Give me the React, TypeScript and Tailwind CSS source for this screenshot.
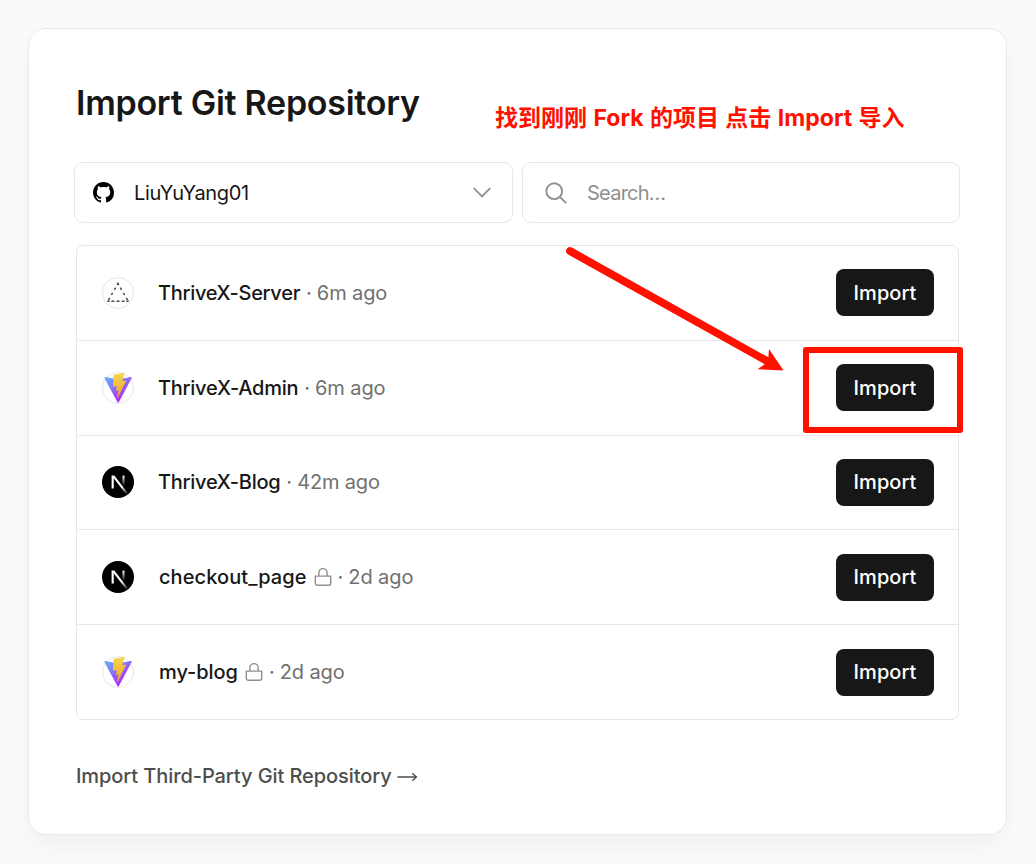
import type { ReactNode } from "react";

type Framework = "none" | "vite" | "next";

type Repo = {
  name: string;
  framework: Framework;
  updated: string;
  isPrivate?: boolean;
  nameClass: string;
  timeClass: string;
};

const repos: Repo[] = [
  { name: "ThriveX-Server", framework: "none", updated: "6m ago", nameClass: "-ml-px tracking-[-0.3px]", timeClass: "tracking-[-0.1px]" },
  { name: "ThriveX-Admin", framework: "vite", updated: "6m ago", nameClass: "-ml-px tracking-[-0.25px]", timeClass: "tracking-[-0.1px]" },
  { name: "ThriveX-Blog", framework: "next", updated: "42m ago", nameClass: "-ml-px tracking-[-0.27px]", timeClass: "tracking-[-0.15px]" },
  { name: "checkout_page", framework: "next", updated: "2d ago", isPrivate: true, nameClass: "tracking-[0.08px]", timeClass: "tracking-[-0.1px]" },
  { name: "my-blog", framework: "vite", updated: "2d ago", isPrivate: true, nameClass: "tracking-[-0.05px]", timeClass: "tracking-[-0.1px]" },
];

function GithubIcon() {
  return (
    <svg viewBox="0 0 16 16" className="size-[21px] shrink-0" fill="#000">
      <path d="M8 0C3.58 0 0 3.58 0 8c0 3.54 2.29 6.53 5.47 7.59.4.07.55-.17.55-.38 0-.19-.01-.82-.01-1.49-2.01.37-2.53-.49-2.69-.94-.09-.23-.48-.94-.82-1.13-.28-.15-.68-.52-.01-.53.63-.01 1.08.58 1.23.82.72 1.21 1.87.87 2.33.66.07-.52.28-.87.51-1.07-1.78-.2-3.64-.89-3.64-3.95 0-.87.31-1.59.82-2.15-.08-.2-.36-1.02.08-2.12 0 0 .67-.21 2.2.82.64-.18 1.32-.27 2-.27s1.36.09 2 .27c1.53-1.04 2.2-.82 2.2-.82.44 1.1.16 1.92.08 2.12.51.56.82 1.27.82 2.15 0 3.07-1.87 3.75-3.65 3.95.29.25.54.73.54 1.48 0 1.07-.01 1.93-.01 2.2 0 .21.15.46.55.38A8.01 8.01 0 0 0 16 8c0-4.42-3.58-8-8-8Z" />
    </svg>
  );
}

function ChevronIcon() {
  return (
    <svg viewBox="0 0 20 12" className="h-3 w-5 shrink-0" fill="none" stroke="#8f8f8f" strokeWidth="1.9">
      <path d="M1.8 1.2 10 9.4l8.2-8.2" />
    </svg>
  );
}

function SearchIcon() {
  return (
    <svg viewBox="0 0 24 24" className="size-6 shrink-0" fill="none" stroke="#8f8f8f" strokeWidth="1.9">
      <circle cx="10.2" cy="10.2" r="7.9" />
      <path d="m15.8 15.8 6.4 6.4" />
    </svg>
  );
}

function LockIcon() {
  return (
    <svg viewBox="0 0 18 20" className="h-5 w-[18px] shrink-0" fill="none" stroke="#8f8f8f" strokeWidth="1.4">
      <path d="M4.900 9.100V5.700a4.100 4.100 0 0 1 8.200 0v3.400" />
      <path d="M1.300 9.100h15.400v7.200a2 2 0 0 1-2 2H3.300a2 2 0 0 1-2-2z" />
    </svg>
  );
}

function Avatar({ children }: { children: ReactNode }) {
  return (
    <span className="flex size-8 shrink-0 items-center justify-center overflow-hidden rounded-full border border-[#e6e6e6] bg-white">
      {children}
    </span>
  );
}

function ViteLogo({ id }: { id: string }) {
  return (
    <svg viewBox="0 0 32 32" className="size-8 shrink-0">
      <defs>
        <linearGradient id={`${id}-body`} x1="3" y1="5" x2="18" y2="28" gradientUnits="userSpaceOnUse">
          <stop stopColor="#5fb4fb" />
          <stop offset="0.12" stopColor="#6aa5f8" />
          <stop offset="1" stopColor="#b12cfb" />
        </linearGradient>
        <linearGradient id={`${id}-bolt`} x1="14" y1="2" x2="18" y2="24" gradientUnits="userSpaceOnUse">
          <stop stopColor="#f9d54f" />
          <stop offset="0.5" stopColor="#f3bd3d" />
          <stop offset="1" stopColor="#eda531" />
        </linearGradient>
      </defs>
      <circle cx="16" cy="16" r="15.5" fill="#fff" stroke="#e6e6e6" />
      <path d="M29.6 6.2 16.8 30.3c-.3.6-1 .6-1.3 0L2.5 6.2c-.3-.6.2-1.2.9-1.1L16 7.4l12.8-2.3c.6-.1 1.1.5.8 1.1Z" fill={`url(#${id}-body)`} />
      <path d="m22.2.8-10.300 1.900a.5.5 0 0 0-.4.4L10.900 14.400c0 .3.2.5.5.4l3-.6c.3-.1.5.2.4.4l-.8 4.100c-.1.3.2.5.4.4l1.600-.5c.3-.1.5.2.4.4l-1.300 6.400c-.1.4.4.6.7.3l.2-.2 8-16.600c.1-.3-.1-.6-.4-.5l-2.800.5c-.3.1-.5-.2-.4-.4L22.600 1.300c.1-.3-.1-.5-.4-.5Z" fill={`url(#${id}-bolt)`} />
    </svg>
  );
}

function NextLogo({ id }: { id: string }) {
  return (
    <svg viewBox="0 0 180 180" className="size-8 shrink-0">
      <defs>
        <linearGradient id={`${id}-slash`} x1="109" y1="116.5" x2="144.5" y2="160.5" gradientUnits="userSpaceOnUse">
          <stop stopColor="#fff" />
          <stop offset="1" stopColor="#fff" stopOpacity="0" />
        </linearGradient>
        <linearGradient id={`${id}-stem`} x1="121" y1="54" x2="120.8" y2="112" gradientUnits="userSpaceOnUse">
          <stop stopColor="#fff" />
          <stop offset="1" stopColor="#fff" stopOpacity="0" />
        </linearGradient>
      </defs>
      <circle cx="90" cy="90" r="90" fill="#000" />
      <path d="M149.508 157.52 69.142 54H54v71.97h12.114V69.384l73.885 95.461a90.304 90.304 0 0 0 9.509-7.325Z" fill={`url(#${id}-slash)`} />
      <path d="M115 54h12v72h-12z" fill={`url(#${id}-stem)`} />
    </svg>
  );
}

function FrameworkIcon({ framework, id }: { framework: Framework; id: string }) {
  if (framework === "vite") return <ViteLogo id={id} />;
  if (framework === "next") return <NextLogo id={id} />;
  return (
    <Avatar>
      <svg viewBox="0 0 32 32" className="size-8 shrink-0" fill="none" stroke="#4a4a4a" strokeWidth="1.5">
        <path d="M15.100 8 16 6.300l.9 1.700M18.400 10.600l1.200 2.200M21.400 15.800l1.200 2.200M24.300 20.800l1.300 2.300M13.600 10.600l-1.200 2.200M10.600 15.800l-1.200 2.200M7.700 20.800l-1.300 2.300" />
        <path d="M5.200 24.200h2.400M9.400 24.200h3M14.500 24.200h3M19.600 24.200h3M24.400 24.200h2.400" />
      </svg>
    </Avatar>
  );
}

function RepoRow({ repo, last }: { repo: Repo; last: boolean }) {
  return (
    <li className={`flex flex-1 items-center pr-6 pl-[25px] ${last ? "" : "border-b border-[#e8e8e8]"}`}>
      <FrameworkIcon framework={repo.framework} id={repo.name} />
      <div className="ml-[25px] flex items-center text-[20px] leading-7">
        <span className={`font-medium text-[#171717] ${repo.nameClass}`}>{repo.name}</span>
        {repo.isPrivate && (
          <span className="ml-[7px]">
            <LockIcon />
          </span>
        )}
        <span className="ml-[6px] text-[#666]">·</span>
        <span className={`ml-[5px] text-[#707070] ${repo.timeClass}`}>{repo.updated}</span>
      </div>
      <button className="ml-auto h-[47px] w-[98px] rounded-[8px] bg-[#171717] text-[20px] font-medium tracking-[0.05px] text-white">
        Import
      </button>
    </li>
  );
}

export default function App() {
  return (
    <div className="h-[864px] w-[1036px] overflow-hidden bg-[#fafafa] px-7 pt-7 font-['Inter','Noto_Sans_CJK_SC',sans-serif]">
      <main className="relative flex h-[807px] w-[979px] flex-col rounded-[18px] border border-[#e8e8e8] bg-white pr-[46px] pl-[46px] shadow-[0_12px_24px_-4px_rgba(0,0,0,0.05)]">
        <h1 className="ml-[1px] mt-[52px] text-[34px] leading-[44px] font-semibold tracking-[-0.27px] whitespace-nowrap text-[#171717]">
          Import Git Repository
        </h1>

        <div className="-ml-px mt-[37px] flex h-[61px] w-[886px] gap-[9px]">
          <button className="flex w-[439px] items-center rounded-[9px] border border-[#e8e8e8] bg-white pr-5 pl-[18px] text-[20px] text-[#171717]">
            <GithubIcon />
            <span className="ml-5 tracking-[-0.35px]">LiuYuYang01</span>
            <span className="ml-auto">
              <ChevronIcon />
            </span>
          </button>
          <label className="flex w-[438px] items-center rounded-[9px] border border-[#e8e8e8] bg-white pl-[21px]">
            <SearchIcon />
            <input
              className="ml-[19px] w-[300px] bg-transparent text-[20px] tracking-[-0.75px] outline-none placeholder:text-[#8f8f8f]"
              placeholder="Search…"
            />
          </label>
        </div>

        <ul className="mt-[22px] ml-[1px] flex h-[475px] w-[883px] flex-col rounded-[7px] border border-[#e8e8e8]">
          {repos.map((repo, i) => (
            <RepoRow key={repo.name} repo={repo} last={i === repos.length - 1} />
          ))}
        </ul>

        <a className="mt-[41px] ml-px flex items-center text-[20px] leading-[30px] font-medium text-[#4d4d4d]">
          <span className="tracking-[-0.08px]">Import Third-Party Git Repository</span>
          <svg viewBox="0 0 22 12" className="mt-[2px] ml-[4px] h-3 w-[22px]" fill="none" stroke="#4d4d4d" strokeWidth="1.3">
            <path d="M1.500 6h19M16.300 2.200 20.500 6l-4.200 3.800" />
          </svg>
        </a>

        <p className="absolute top-[72px] left-[466px] text-[23px] leading-[34px] font-bold tracking-[0.04px] whitespace-nowrap text-[#ff1100] [word-spacing:0.8px]">
          找到刚刚 Fork 的项目 点击 Import 导入
        </p>
        <svg viewBox="0 0 224 130" className="absolute top-[215px] left-[534px] h-[130px] w-[224px]">
          <path d="M7 7 203 116.500" stroke="#ff1100" strokeWidth="7.800" strokeLinecap="round" />
          <path d="M220.500 126.500 206 105l-1 13-10.500 7.300Z" fill="#ff1100" />
        </svg>
        <div className="absolute top-[318px] left-[774px] h-[86px] w-[160px] rounded-[3px] border-6 border-[#ff1100]" />
      </main>
    </div>
  );
}
